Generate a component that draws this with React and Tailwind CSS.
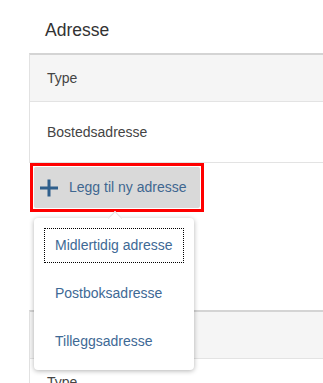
import { useState } from 'react'

const items = ['Midlertidig adresse', 'Postboksadresse', 'Tilleggsadresse']

function PlusIcon() {
  return (
    <svg width="20" height="20" viewBox="0 0 20 20" className="shrink-0">
      <path d="M10 1.5v17M1 10h18" stroke="#2f5f8c" strokeWidth="3" fill="none" />
    </svg>
  )
}

export default function App() {
  const [active] = useState(0)

  return (
    <div className="relative w-[323px] h-[383px] overflow-hidden bg-white font-['Liberation_Sans',Arial,sans-serif]">
      <h2 className="pt-[20px] pl-[45px] text-[17.5px] leading-[20px] text-[#333] font-normal">Adresse</h2>

      <div className="mt-[13px] ml-[29px] w-[400px] border-l border-[#e2e2e2] border-t-2 border-t-[#d4d4d4] text-[14px] text-[#444]">
        <div className="h-[47px] flex items-center pl-[17px] bg-[#f5f5f5] border-b border-[#e3e3e3]">Type</div>
        <div className="h-[61px] flex items-center pl-[17px] border-b border-[#e3e3e3]">Bostedsadresse</div>
      </div>

      <div className="ml-[30px] w-[174px] h-[49px] border-[3px] border-[#ff0000] p-[1px]">
        <button className="w-full h-full flex items-center gap-[10px] pl-[5px] bg-[#d9d9d9] rounded-[2px] text-[14px] text-[#3f6790]">
          <PlusIcon />
          <span>Legg til ny adresse</span>
        </button>
      </div>

      {/* second section, mostly hidden behind the open menu */}
      <div className="mt-[98px] ml-[29px] w-[400px] border-l border-[#e2e2e2] border-t-2 border-t-[#d4d4d4] text-[14px] text-[#444]">
        <div className="h-[47px] bg-[#f5f5f5] border-b border-[#e3e3e3]" />
        <div className="h-[61px] pl-[17px] pt-[15px] leading-[16px]">Type</div>
      </div>

      <div className="absolute left-[34px] top-[218px] w-[160px] h-[152px] bg-white rounded-[4px] shadow-[0_1px_5px_rgba(0,0,0,0.3)]">
        <div className="absolute left-[76px] -top-[5px] w-[10px] h-[10px] rotate-45 bg-white border-l border-t border-[#e4e4e4]" />
        <ul className="relative flex flex-col gap-[13px] p-[10px]">
          {items.map((it, i) => (
            <li
              key={it}
              className={
                i === active
                  ? 'h-[35px] flex items-center pl-[10px] border border-dotted border-black text-[14px] text-[#3e6995]'
                  : 'h-[35px] flex items-center pl-[11px] text-[14px] text-[#3e6995]'
              }
            >
              {it}
            </li>
          ))}
        </ul>
      </div>
    </div>
  )
}
